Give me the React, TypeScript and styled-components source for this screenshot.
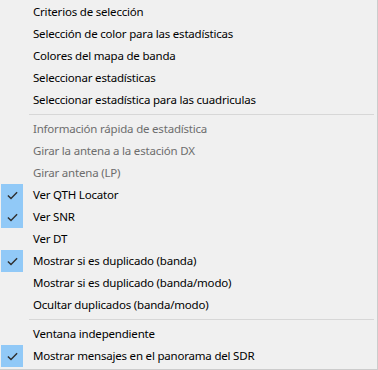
import React from "react";
import styled, { createGlobalStyle } from "styled-components";

const Global = createGlobalStyle`
  html, body { margin: 0; padding: 0; background: #f0f0f0; }
  #root { width: 378px; height: 370px; }
`;

const Menu = styled.div`
  box-sizing: border-box;
  width: 378px;
  height: 370px;
  background: #f0f0f0;
  border-right: 1px solid #cccccc;
  border-bottom: 1px solid #cccccc;
  padding: 1px 0 0 0;
  font-family: "Noto Sans", "Liberation Sans", sans-serif;
  font-size: 11.5px;
  letter-spacing: -0.2px;
  display: flex;
  flex-direction: column;
`;

const Item = styled.div<{ $disabled?: boolean }>`
  display: flex;
  align-items: center;
  height: 22px;
  color: ${(p) => (p.$disabled ? "#6d6d6d" : "#000000")};
  white-space: nowrap;
`;

const Gutter = styled.div<{ $checked?: boolean }>`
  width: 22px;
  height: 22px;
  margin-left: 1px;
  margin-right: 10px;
  display: flex;
  align-items: center;
  justify-content: center;
  background: ${(p) => (p.$checked ? "#91c9f7" : "transparent")};
`;

const Label = styled.span`
  line-height: 22px;
`;

const Separator = styled.div`
  height: 7px;
  display: flex;
  align-items: center;
  padding-left: 29px;
  padding-right: 3px;
  &::after {
    content: "";
    flex: 1;
    height: 1px;
    background: #d7d7d7;
  }
`;

const Check = () => (
  <svg width="11" height="9" viewBox="0 0 11 9">
    <path d="M0.9 4.4 L4 7.5 L10.1 1.3" fill="none" stroke="#2f2f2f" strokeWidth="1.4" />
  </svg>
);

type Entry = { t: string; c?: boolean; d?: boolean } | "sep";

const entries: Entry[] = [
  { t: "Criterios de selección" },
  { t: "Selección de color para las estadísticas" },
  { t: "Colores del mapa de banda" },
  { t: "Seleccionar estadísticas" },
  { t: "Seleccionar estadística para las cuadriculas" },
  "sep",
  { t: "Información rápida de estadística", d: true },
  { t: "Girar la antena a la estación DX", d: true },
  { t: "Girar antena (LP)", d: true },
  { t: "Ver QTH Locator", c: true },
  { t: "Ver SNR", c: true },
  { t: "Ver DT" },
  { t: "Mostrar si es duplicado (banda)", c: true },
  { t: "Mostrar si es duplicado (banda/modo)" },
  { t: "Ocultar duplicados (banda/modo)" },
  "sep",
  { t: "Ventana independiente" },
  { t: "Mostrar mensajes en el panorama del SDR", c: true },
];

export default function App() {
  return (
    <>
      <Global />
      <Menu>
        {entries.map((e, i) =>
          e === "sep" ? (
            <Separator key={i} />
          ) : (
            <Item key={i} $disabled={e.d}>
              <Gutter $checked={e.c}>{e.c && <Check />}</Gutter>
              <Label>{e.t}</Label>
            </Item>
          )
        )}
      </Menu>
    </>
  );
}
